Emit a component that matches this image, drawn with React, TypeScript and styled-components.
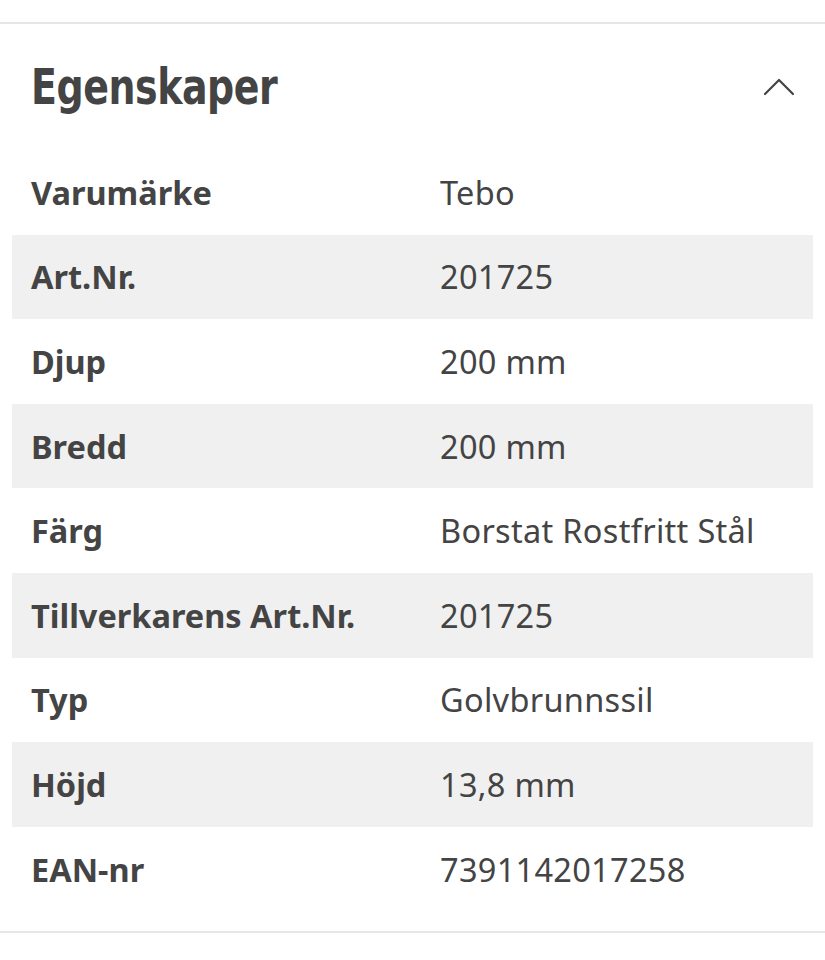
import React from "react";
import styled, { createGlobalStyle } from "styled-components";

const Global = createGlobalStyle`
  html, body { margin: 0; padding: 0; background: #fff; }
  body { font-family: "Noto Sans", "Liberation Sans", sans-serif; color: #444; }
`;

const Page = styled.div`
  width: 825px;
  height: 960px;
  padding-top: 22px;
  box-sizing: border-box;
`;

const Section = styled.section`
  border-top: 2px solid #e6e6e6;
  border-bottom: 2px solid #e6e6e6;
  padding: 0 12px 20px;
`;

const Header = styled.div`
  height: 126px;
  display: flex;
  align-items: center;
  justify-content: space-between;
  padding: 0 19px;
`;

const Title = styled.h2`
  margin: 0;
  font-family: "DejaVu Sans Condensed", "DejaVu Sans", sans-serif;
  font-weight: 700;
  font-size: 49px;
  color: #444;
  letter-spacing: -0.5px;
  transform: scaleX(0.86);
  transform-origin: left center;
`;

const Chevron = styled.svg`
  width: 32px;
  height: 20px;
  margin-right: -1px;
`;

const Table = styled.div`
  display: flex;
  flex-direction: column;
`;

const Row = styled.div<{ $striped: boolean }>`
  height: 84.6px;
  display: grid;
  grid-template-columns: 409px 1fr;
  align-items: center;
  padding-left: 19px;
  background: ${(p) => (p.$striped ? "#f0f0f0" : "transparent")};
`;

const Label = styled.div`
  font-weight: 700;
  font-size: 32.5px;
  color: #444;
`;

const Value = styled.div`
  font-weight: 400;
  font-size: 32.5px;
  color: #444;
  letter-spacing: 0.3px;
`;

const rows: [string, string][] = [
  ["Varumärke", "Tebo"],
  ["Art.Nr.", "201725"],
  ["Djup", "200 mm"],
  ["Bredd", "200 mm"],
  ["Färg", "Borstat Rostfritt Stål"],
  ["Tillverkarens Art.Nr.", "201725"],
  ["Typ", "Golvbrunnssil"],
  ["Höjd", "13,8 mm"],
  ["EAN-nr", "7391142017258"],
];

export default function App() {
  return (
    <Page>
      <Global />
      <Section>
        <Header>
          <Title>Egenskaper</Title>
          <Chevron viewBox="0 0 32 20" fill="none">
            <path d="M2 17 L16 3 L30 17" stroke="#444" strokeWidth="2.2" strokeLinecap="round" strokeLinejoin="round" />
          </Chevron>
        </Header>
        <Table>
          {rows.map(([l, v], i) => (
            <Row key={l} $striped={i % 2 === 1}>
              <Label>{l}</Label>
              <Value>{v}</Value>
            </Row>
          ))}
        </Table>
      </Section>
    </Page>
  );
}
